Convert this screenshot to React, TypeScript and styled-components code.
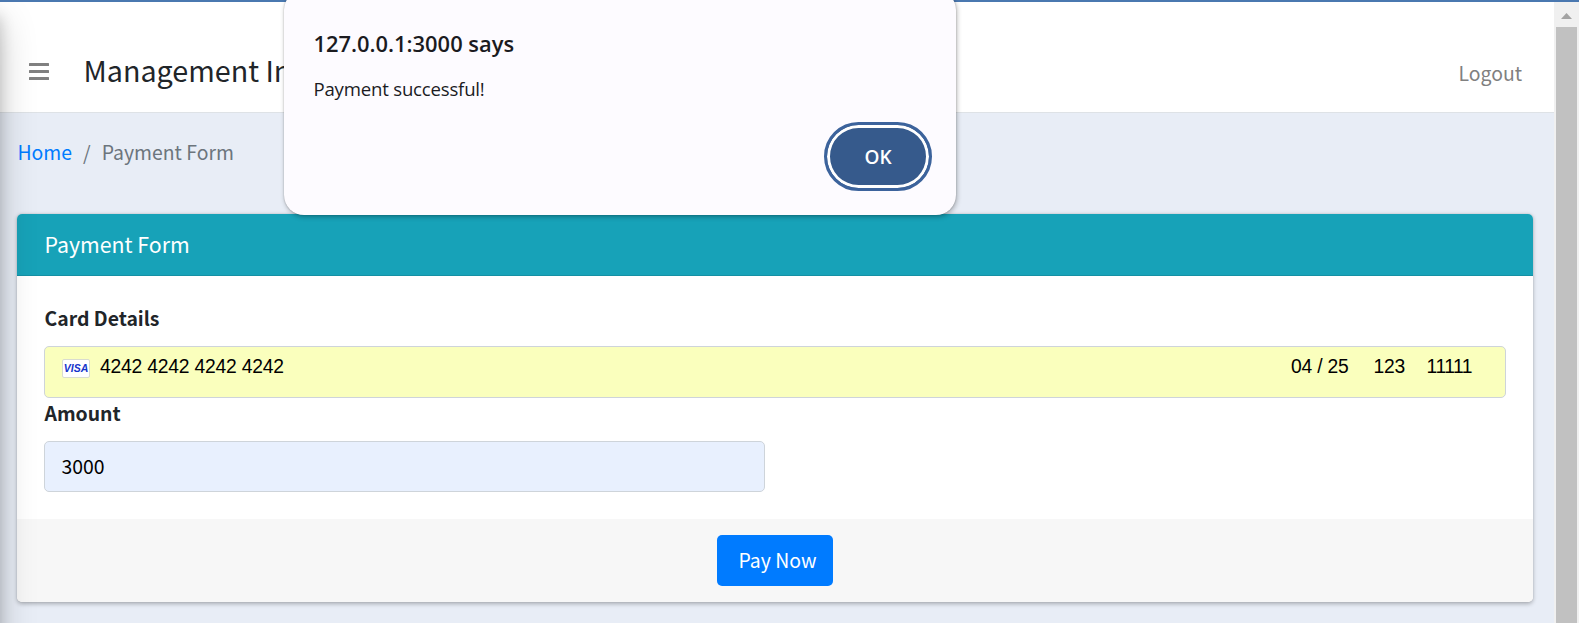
import React from "react";
import styled, { createGlobalStyle } from "styled-components";

const sans = '"Noto Sans CJK SC", "Noto Sans", sans-serif';

const GlobalStyle = createGlobalStyle`
  * { box-sizing: border-box; }
  html, body { margin: 0; overflow: hidden; }
  body { font-family: ${sans}; color: #212529; }
`;

const Screen = styled.div`
  position: relative;
  display: flex;
  flex-direction: column;
  width: 1579px;
  height: 623px;
  overflow: hidden;
  background: #e8edf6;
`;

const TopLine = styled.div`
  flex: none;
  height: 2px;
  background: #4a78b0;
`;

const Viewport = styled.div`
  flex: 1;
  display: flex;
  min-height: 0;
`;

const Page = styled.div`
  position: relative;
  flex: 1;
  overflow: hidden;
`;

const Navbar = styled.header`
  display: flex;
  align-items: center;
  height: 111px;
  padding: 30px 32px 0 29px;
  background: #fff;
  border-bottom: 1px solid #dee2e6;
`;

const Brand = styled.div`
  margin: -4px 0 0 34.5px;
  font-size: 28.7px;
  line-height: 40px;
  white-space: nowrap;
`;

const Logout = styled.a`
  margin: 1px 0 0 auto;
  font-size: 19.4px;
  line-height: 28px;
  color: #808080;
`;

const Breadcrumb = styled.nav`
  display: flex;
  gap: 11px;
  padding: 25px 17.5px 0;
  height: 101px;
  font-size: 19.4px;
  line-height: 28px;
  color: #6c757d;
`;

const HomeLink = styled.a`
  color: #007bff;
`;

const Card = styled.section`
  width: 1516px;
  margin-left: 17px;
  border-radius: 5px;
  background: #fff;
  box-shadow: 0 0 1.4px rgba(0, 0, 0, 0.125), 0 1.4px 4px rgba(0, 0, 0, 0.27);
`;

const CardHeader = styled.h3`
  margin: 0;
  height: 62px;
  padding: 0 27.5px;
  font-size: 21.3px;
  font-weight: 400;
  line-height: 59px;
  color: #fff;
  background: #17a2b8;
  border-bottom: 1px solid #1590a4;
  border-radius: 5px 5px 0 0;
`;

const CardBody = styled.div`
  height: 243px;
  padding: 27px 27px 0;
`;

const Label = styled.label`
  display: block;
  height: 32px;
  margin-bottom: 11px;
  padding-left: 0.5px;
  font-size: 19.4px;
  font-weight: 700;
  line-height: 30px;
`;

const Field = styled.div<{ $width: string; $height: number; $fill: string }>`
  display: flex;
  width: ${(p) => p.$width};
  height: ${(p) => p.$height}px;
  padding: 0 17px;
  border: 1px solid #ced4da;
  border-radius: 5px;
  background: ${(p) => p.$fill};
  color: #000;
`;

const CardLine = styled.div`
  display: flex;
  flex: 1;
  align-items: center;
  height: 40px;
  padding-right: 16px;
  font-family: "Liberation Sans", Arial, sans-serif;
  font-size: 19.3px;
  letter-spacing: -0.2px;
`;

const Visa = styled.span`
  display: flex;
  align-items: center;
  justify-content: center;
  width: 28px;
  height: 19px;
  margin: 2px 10px 0 0;
  border: 1px solid #d9dcd0;
  border-radius: 2px;
  background: #fff;
  color: #1434cb;
  font: italic 700 10.5px "Liberation Sans", Arial, sans-serif;
  letter-spacing: 0;
`;

const Expiry = styled.span`
  margin-left: auto;
`;

const Code = styled.span`
  margin-left: 25px;
`;

const Zip = styled.span`
  margin-left: 21.5px;
  letter-spacing: -0.5px;
`;

const Amount = styled.span`
  margin-left: -0.5px;
  font-size: 19.4px;
  line-height: 47px;
`;

const CardFooter = styled.footer`
  display: flex;
  height: 83px;
  padding: 16px 0 0 700px;
  background: #f7f7f7;
  border-radius: 0 0 5px 5px;
`;

const PayButton = styled.button`
  width: 116px;
  height: 51px;
  padding: 0 0 2px 5px;
  border: 0;
  border-radius: 5px;
  background: #007bff;
  color: #fff;
  font: 400 19.4px/49px ${sans};
  white-space: nowrap;
`;

/* Shadow cast by the collapsed sidebar, which sits past the left edge. */
const SidebarShadow = styled.div`
  position: absolute;
  top: 0;
  left: -100px;
  width: 100px;
  height: 900px;
  pointer-events: none;
  box-shadow: 0 19px 38px rgba(0, 0, 0, 0.2), 0 13.5px 13.5px rgba(0, 0, 0, 0.18);
`;

const Scrollbar = styled.div`
  display: flex;
  flex-direction: column;
  align-items: center;
  width: 25px;
  background: #f0f0f0;
`;

const ArrowBox = styled.div`
  height: 25px;
  padding-top: 10px;
  line-height: 0;
`;

const Thumb = styled.div`
  flex: 1;
  width: 21px;
  background: #c1c1c1;
`;

const Dialog = styled.div`
  position: absolute;
  top: -10px;
  left: 283.5px;
  width: 672px;
  height: 225px;
  padding: 36px 23.5px 0 30px;
  border-radius: 20px;
  background: #fdfbff;
  box-shadow: 0 0 1.5px rgba(0, 0, 0, 0.3), 1px 2px 5px rgba(0, 0, 0, 0.28);
  font-family: "Open Sans", "Noto Sans", sans-serif;
  color: #1b1b1f;
`;

const DialogTitle = styled.h2`
  margin: 0;
  font-size: 21.9px;
  font-weight: 600;
  line-height: 36px;
`;

const DialogText = styled.p`
  margin: 11px 0 0;
  font-size: 18.6px;
  line-height: 32px;
  letter-spacing: -0.2px;
`;

const OkButton = styled.button`
  display: block;
  width: 108px;
  height: 69px;
  margin: 17px 0 0 auto;
  padding: 0;
  border: 3px solid #3c639c;
  border-radius: 34.5px;
  background: #365a8c;
  box-shadow: inset 0 0 0 3px #fff;
  color: #fff;
  font: 600 19px "Open Sans", sans-serif;
`;

function MenuIcon() {
  return (
    <svg width="20" height="18" viewBox="0 0 20 18" fill="#808080">
      <rect width="20" height="3" rx="0.5" />
      <rect y="7" width="20" height="3" rx="0.5" />
      <rect y="14" width="20" height="3" rx="0.5" />
    </svg>
  );
}

export default function App() {
  return (
    <Screen>
      <GlobalStyle />
      <TopLine />
      <Viewport>
        <Page>
          <Navbar>
            <MenuIcon />
            <Brand>Management In</Brand>
            <Logout>Logout</Logout>
          </Navbar>
          <Breadcrumb>
            <HomeLink>Home</HomeLink>
            <span>/</span>
            <span>Payment Form</span>
          </Breadcrumb>
          <Card>
            <CardHeader>Payment Form</CardHeader>
            <CardBody>
              <Label>Card Details</Label>
              <Field $width="1462px" $height={52} $fill="#faffbd">
                <CardLine>
                  <Visa>VISA</Visa>
                  <span>4242 4242 4242 4242</span>
                  <Expiry>04 / 25</Expiry>
                  <Code>123</Code>
                  <Zip>11111</Zip>
                </CardLine>
              </Field>
              <Label>Amount</Label>
              <Field $width="721px" $height={51} $fill="#e8f0fe">
                <Amount>3000</Amount>
              </Field>
            </CardBody>
            <CardFooter>
              <PayButton>Pay Now</PayButton>
            </CardFooter>
          </Card>
          <SidebarShadow />
        </Page>
        <Scrollbar>
          <ArrowBox>
            <svg width="11" height="6" viewBox="0 0 11 6">
              <path d="M0 6L5.5 0L11 6Z" fill="#a3a3a3" />
            </svg>
          </ArrowBox>
          <Thumb />
        </Scrollbar>
      </Viewport>
      <Dialog>
        <DialogTitle>127.0.0.1:3000 says</DialogTitle>
        <DialogText>Payment successful!</DialogText>
        <OkButton>OK</OkButton>
      </Dialog>
    </Screen>
  );
}
